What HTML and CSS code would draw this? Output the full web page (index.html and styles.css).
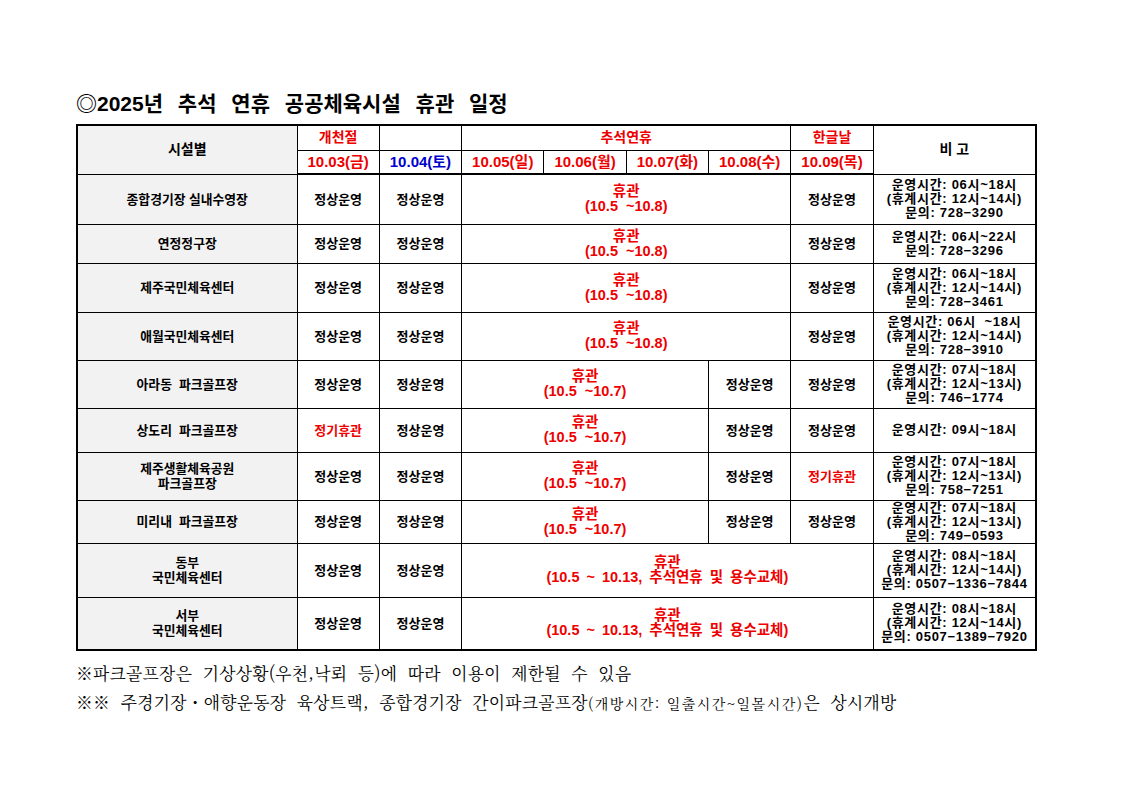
FILE: index.html
```html
<!DOCTYPE html>
<html lang="ko">
<head>
<meta charset="utf-8">
<title>2025년 추석 연휴 공공체육시설 휴관 일정</title>
<link rel="stylesheet" href="styles.css">
</head>
<body>
<div class="page">
  <h1 class="title">◎2025년 추석 연휴 공공체육시설 휴관 일정</h1>
  <table class="sched">
    <colgroup>
      <col class="c-fac">
      <col class="c-day"><col class="c-day"><col class="c-day"><col class="c-day">
      <col class="c-day"><col class="c-day"><col class="c-day">
      <col class="c-note">
    </colgroup>
    <thead>
      <tr class="hr1">
        <th rowspan="2" class="fac">시설별</th>
        <th class="red">개천절</th>
        <th></th>
        <th colspan="4" class="red">추석연휴</th>
        <th class="red">한글날</th>
        <th rowspan="2" class="bigo">비 고</th>
      </tr>
      <tr class="hr2">
        <th class="date red">10.03(금)</th>
        <th class="date blue">10.04(토)</th>
        <th class="date red">10.05(일)</th>
        <th class="date red">10.06(월)</th>
        <th class="date red">10.07(화)</th>
        <th class="date red">10.08(수)</th>
        <th class="date red">10.09(목)</th>
      </tr>
    </thead>
    <tbody>
      <tr>
        <td class="fac">종합경기장 실내수영장</td>
        <td>정상운영</td><td>정상운영</td>
        <td colspan="4" class="closed">휴관<br>(10.5&nbsp; ~10.8)</td>
        <td>정상운영</td>
        <td class="note">운영시간: 06시~18시<br>(휴계시간: 12시~14시)<br>문의: 728−3290</td>
      </tr>
      <tr>
        <td class="fac">연정정구장</td>
        <td>정상운영</td><td>정상운영</td>
        <td colspan="4" class="closed">휴관<br>(10.5&nbsp; ~10.8)</td>
        <td>정상운영</td>
        <td class="note">운영시간: 06시~22시<br>문의: 728−3296</td>
      </tr>
      <tr>
        <td class="fac">제주국민체육센터</td>
        <td>정상운영</td><td>정상운영</td>
        <td colspan="4" class="closed">휴관<br>(10.5&nbsp; ~10.8)</td>
        <td>정상운영</td>
        <td class="note">운영시간: 06시~18시<br>(휴계시간: 12시~14시)<br>문의: 728−3461</td>
      </tr>
      <tr>
        <td class="fac">애월국민체육센터</td>
        <td>정상운영</td><td>정상운영</td>
        <td colspan="4" class="closed">휴관<br>(10.5&nbsp; ~10.8)</td>
        <td>정상운영</td>
        <td class="note">운영시간: 06시&nbsp; ~18시<br>(휴계시간: 12시~14시)<br>문의: 728−3910</td>
      </tr>
      <tr>
        <td class="fac">아라동&nbsp; 파크골프장</td>
        <td>정상운영</td><td>정상운영</td>
        <td colspan="3" class="closed">휴관<br>(10.5&nbsp; ~10.7)</td>
        <td>정상운영</td><td>정상운영</td>
        <td class="note">운영시간: 07시~18시<br>(휴계시간: 12시~13시)<br>문의: 746−1774</td>
      </tr>
      <tr>
        <td class="fac">상도리&nbsp; 파크골프장</td>
        <td class="red">정기휴관</td><td>정상운영</td>
        <td colspan="3" class="closed">휴관<br>(10.5&nbsp; ~10.7)</td>
        <td>정상운영</td><td>정상운영</td>
        <td class="note">운영시간: 09시~18시</td>
      </tr>
      <tr>
        <td class="fac">제주생활체육공원<br>파크골프장</td>
        <td>정상운영</td><td>정상운영</td>
        <td colspan="3" class="closed">휴관<br>(10.5&nbsp; ~10.7)</td>
        <td>정상운영</td><td class="red">정기휴관</td>
        <td class="note">운영시간: 07시~18시<br>(휴계시간: 12시~13시)<br>문의: 758−7251</td>
      </tr>
      <tr>
        <td class="fac">미리내&nbsp; 파크골프장</td>
        <td>정상운영</td><td>정상운영</td>
        <td colspan="3" class="closed">휴관<br>(10.5&nbsp; ~10.7)</td>
        <td>정상운영</td><td>정상운영</td>
        <td class="note">운영시간: 07시~18시<br>(휴계시간: 12시~13시)<br>문의: 749−0593</td>
      </tr>
      <tr>
        <td class="fac">동부<br>국민체육센터</td>
        <td>정상운영</td><td>정상운영</td>
        <td colspan="5" class="closed closed-long">휴관<br>(10.5 ~ 10.13, 추석연휴 및 용수교체)</td>
        <td class="note">운영시간: 08시~18시<br>(휴계시간: 12시~14시)<br>문의: 0507−1336−7844</td>
      </tr>
      <tr>
        <td class="fac">서부<br>국민체육센터</td>
        <td>정상운영</td><td>정상운영</td>
        <td colspan="5" class="closed closed-long">휴관<br>(10.5 ~ 10.13, 추석연휴 및 용수교체)</td>
        <td class="note">운영시간: 08시~18시<br>(휴계시간: 12시~14시)<br>문의: 0507−1389−7920</td>
      </tr>
    </tbody>
  </table>
  <div class="footnotes">
    <p class="fn">※파크골프장은 기상상황(우천,낙뢰 등)에 따라 이용이 제한될 수 있음</p>
    <p class="fn">※※ 주경기장・애향운동장 육상트랙, 종합경기장 간이파크골프장<span class="small">(개방시간: 일출시간~일몰시간)</span>은 상시개방</p>
  </div>
</div>
</body>
</html>
```

FILE: styles.css
```css
* { box-sizing: border-box; }

body {
  margin: 0;
  background: #fff;
  color: #000;
  font-family: "Liberation Sans", "Noto Sans CJK KR", sans-serif;
}

.page {
  padding: 90px 0 0 76px;
}

.title {
  margin: 0;
  font-size: 21px;
  line-height: 28px;
  font-weight: 700;
  word-spacing: 9px;
  height: 34px;
}

.sched {
  border-collapse: collapse;
  table-layout: fixed;
  width: 959px;
  border: 2px solid #000;
}

.c-fac { width: 220px; }
.c-day { width: 82.3px; }
.c-note { width: 163px; }

.sched th,
.sched td {
  border: 1px solid #000;
  padding: 0;
  text-align: center;
  vertical-align: middle;
  font-weight: 700;
  font-size: 13px;
  line-height: 15px;
  white-space: nowrap;
}

.sched th { font-size: 14px; }
.sched th.date { font-size: 15px; }

.sched .fac { background: #f2f2f2; }
.sched td.fac { font-size: 12.8px; }

.hr1 { height: 25px; }
.hr2 { height: 24px; }
.hr2 th { border-bottom: 2px solid #000; }

.sched tbody tr:nth-child(1) { height: 50px; }
.sched tbody tr:nth-child(2) { height: 39px; }
.sched tbody tr:nth-child(3) { height: 49px; }
.sched tbody tr:nth-child(4) { height: 48px; }
.sched tbody tr:nth-child(5) { height: 48px; }
.sched tbody tr:nth-child(6) { height: 44px; }
.sched tbody tr:nth-child(7) { height: 48px; }
.sched tbody tr:nth-child(8) { height: 43px; }
.sched tbody tr:nth-child(9) { height: 54px; }
.sched tbody tr:nth-child(10) { height: 53px; }

.red { color: #ee0000; }
.blue { color: #0000cc; }

.sched td.closed {
  color: #ee0000;
  font-size: 14.5px;
}

.sched td.closed-long {
  word-spacing: 3px;
}

.sched td.note {
  line-height: 14px;
  font-size: 13px;
  letter-spacing: 0.7px;
}

.footnotes {
  padding-top: 8px;
}

.fn {
  margin: 0;
  font-family: "Noto Serif CJK KR", "Liberation Serif", "Noto Sans CJK KR", serif;
  font-size: 16.8px;
  line-height: 29px;
  font-weight: 400;
  letter-spacing: 0.3px;
  word-spacing: 5px;
}

.fn .small {
  font-size: 14px;
  letter-spacing: 1.5px;
  word-spacing: 0;
}
```
